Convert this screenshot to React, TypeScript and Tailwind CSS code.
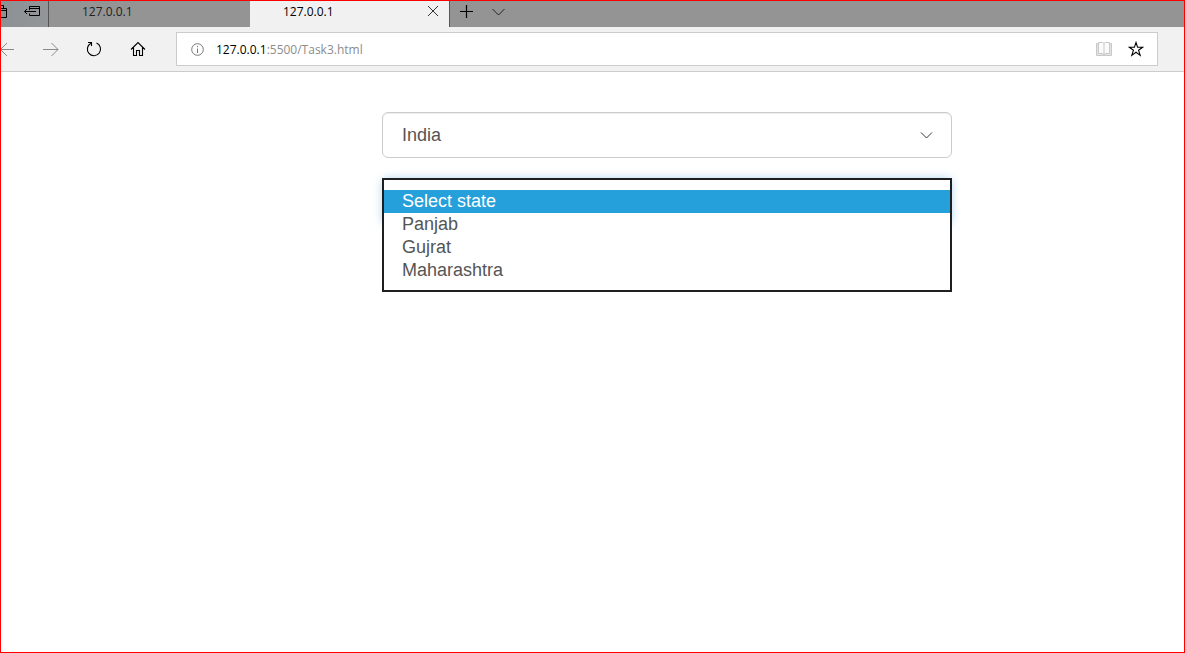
import { useState } from "react";
import type { ReactNode } from "react";

const states = ["Select state", "Panjab", "Gujrat", "Maharashtra"];

function Icon({ w, h, children, className = "" }: { w: number; h: number; children: ReactNode; className?: string }) {
  return (
    <svg
      width={w}
      height={h}
      viewBox={`0 0 ${w} ${h}`}
      fill="none"
      stroke="currentColor"
      strokeWidth="1"
      aria-hidden="true"
      className={`block shrink-0 ${className}`}
    >
      {children}
    </svg>
  );
}

function TabStrip() {
  return (
    <div className="flex h-[26px] bg-[#949494] text-black">
      <div className="flex w-12 shrink-0 items-start border-r border-[#555] bg-linear-to-r from-[#8c9195] to-[#929699] pt-1">
        <button type="button" aria-label="Show set aside tabs" className="w-[23px]">
          <Icon w={8} h={14}>
            <path d="M0 3.5H5.5V12.5H0M0 5.5H5M0 0.5H2.5V3" />
          </Icon>
        </button>
        <button type="button" aria-label="Set tabs aside">
          <Icon w={17} h={14}>
            <path d="M5.5 5V1.5H15.5V10.5H5.5V8.5M5.5 3.5H15.5M0.5 6.5H12M3 4L0.5 6.5L3 9" />
          </Icon>
        </button>
      </div>
      <button type="button" className="w-[201px] shrink-0 pb-1 pl-[33px] text-left text-xs leading-5 text-[#222]">
        127.0.0.1
      </button>
      <div className="flex w-[200px] shrink-0 items-start justify-between border-r border-[#555] bg-[#f1f1f1] pr-2.5 pl-[33px]">
        <button type="button" className="text-xs leading-[22px]">
          127.0.0.1
        </button>
        <button type="button" aria-label="Close tab" className="pt-1">
          <Icon w={12} h={12} className="text-[#333]">
            <path d="M1 1L11 11M11 1L1 11" />
          </Icon>
        </button>
      </div>
      <div className="flex items-start gap-[19px] pt-1 pl-2.5">
        <button type="button" aria-label="New tab">
          <Icon w={13} h={13}>
            <path d="M6.5 0V13M0 6.5H13" strokeWidth="1.2" />
          </Icon>
        </button>
        <button type="button" aria-label="Tab previews">
          <Icon w={13} h={13} className="text-[#222]">
            <path d="M0.5 4L6.5 10L12.5 4" />
          </Icon>
        </button>
      </div>
    </div>
  );
}

function Toolbar() {
  return (
    <div className="flex h-[45px] items-center border-b border-[#ccc] bg-[#f1f1f1] pr-[26px]">
      <div className="flex w-[175px] shrink-0 items-center">
        <button type="button" aria-label="Back" className="w-[42px] text-[#8a8a8a]">
          <Icon w={13} h={15}>
            <path d="M0 7.5H13M6 1L-0.5 7.5L6 14" />
          </Icon>
        </button>
        <button type="button" aria-label="Forward" className="w-[43px] text-[#8a8a8a]">
          <Icon w={16} h={15}>
            <path d="M0 7.5H15M8.5 1L15 7.5L8.5 14" />
          </Icon>
        </button>
        <button type="button" aria-label="Refresh" className="w-11">
          <Icon w={16} h={16}>
            <path d="M10.5 2A6.6 6.6 0 1 1 5 2.2" strokeWidth="1.1" />
            <path d="M2 1.5H5.5V5" strokeWidth="1.1" />
          </Icon>
        </button>
        <button type="button" aria-label="Home">
          <Icon w={16} h={16}>
            <path d="M1 8.5L8 1.6L15 8.5M3.5 6.5V14.5H6.5V9.5H9.5V14.5H12.5V6.5" strokeWidth="1.1" />
          </Icon>
        </button>
      </div>
      <form
        className="flex h-[34px] flex-1 items-center border border-[#ccc] bg-white pr-[13px] pl-3.5"
        onSubmit={(e) => e.preventDefault()}
      >
        <Icon w={13} h={13} className="mr-3 text-[#777]">
          <circle cx="6.5" cy="6.5" r="5.8" />
          <path d="M6.5 5.5V10M6.5 3V4.2" />
        </Icon>
        <label htmlFor="address" className="pt-0.5 text-xs leading-5 text-black">
          127.0.0.1
        </label>
        <input
          id="address"
          type="text"
          defaultValue=":5500/Task3.html"
          className="min-w-0 flex-1 bg-transparent pt-0.5 text-xs leading-5 text-[#8c8c8c] outline-none"
        />
        <button type="button" aria-label="Reading view" className="mr-4">
          <Icon w={16} h={16} className="text-[#c8c8c8]">
            <path d="M0.5 2.5H15.5V14.5H0.5Z" fill="#e4e4e4" />
            <path d="M2.5 1.5H6.5L8 2.5L9.5 1.5H13.5V12.5H9.5L8 13.5L6.5 12.5H2.5ZM8 2.5V13.5" fill="#fafafa" />
          </Icon>
        </button>
        <button type="button" aria-label="Add to favorites">
          <Icon w={16} h={16}>
            <path d="M8 1.5L9.6 6.3H14.6L10.6 9.3L12.2 14.4L8 11.3L3.8 14.4L5.4 9.3L1.4 6.3H6.4Z" strokeWidth="1.1" />
          </Icon>
        </button>
      </form>
    </div>
  );
}

export default function App() {
  const [selected, setSelected] = useState(states[0]);
  return (
    <div className="flex min-h-screen flex-col border border-[#f00] bg-white font-['Open_Sans','Noto_Sans',sans-serif]">
      <header>
        <TabStrip />
        <Toolbar />
      </header>
      <main className="flex flex-1 justify-center pt-10 pl-[149px] font-['Liberation_Sans',Arial,sans-serif] text-lg text-[#555]">
        <div className="flex w-full max-w-[570px] flex-col gap-5">
          <div className="relative">
            <select
              aria-label="Country"
              defaultValue="India"
              className="h-[46px] w-full appearance-none rounded-md border border-[#ccc] bg-white pr-10 pl-[19px] shadow-[inset_0_1px_1px_rgba(0,0,0,0.075)]"
            >
              <option>India</option>
            </select>
            <Icon w={13} h={8} className="pointer-events-none absolute top-5 right-[19px] text-[#333]">
              <path d="M1 0.5L6.5 6L12 0.5" />
            </Icon>
          </div>
          <div className="relative">
            <select
              aria-label="State"
              value={selected}
              onChange={(e) => setSelected(e.target.value)}
              className="h-[46px] w-full appearance-none rounded-md border border-[#66afe9] pl-[19px] shadow-[0_0_8px_rgba(102,175,233,0.5)]"
            >
              {states.map((s) => (
                <option key={s}>{s}</option>
              ))}
            </select>
            <div
              role="listbox"
              aria-label="State"
              className="absolute inset-x-0 top-0 border-2 border-[#1f1f1f] bg-white pt-2.5 pb-2"
            >
              {states.map((s) => (
                <button
                  key={s}
                  type="button"
                  role="option"
                  aria-selected={s === selected}
                  onClick={() => setSelected(s)}
                  className={`block w-full pl-[18px] text-left leading-[23px] ${s === selected ? "bg-[#26a0da] text-white" : ""}`}
                >
                  {s}
                </button>
              ))}
            </div>
          </div>
        </div>
      </main>
    </div>
  );
}
